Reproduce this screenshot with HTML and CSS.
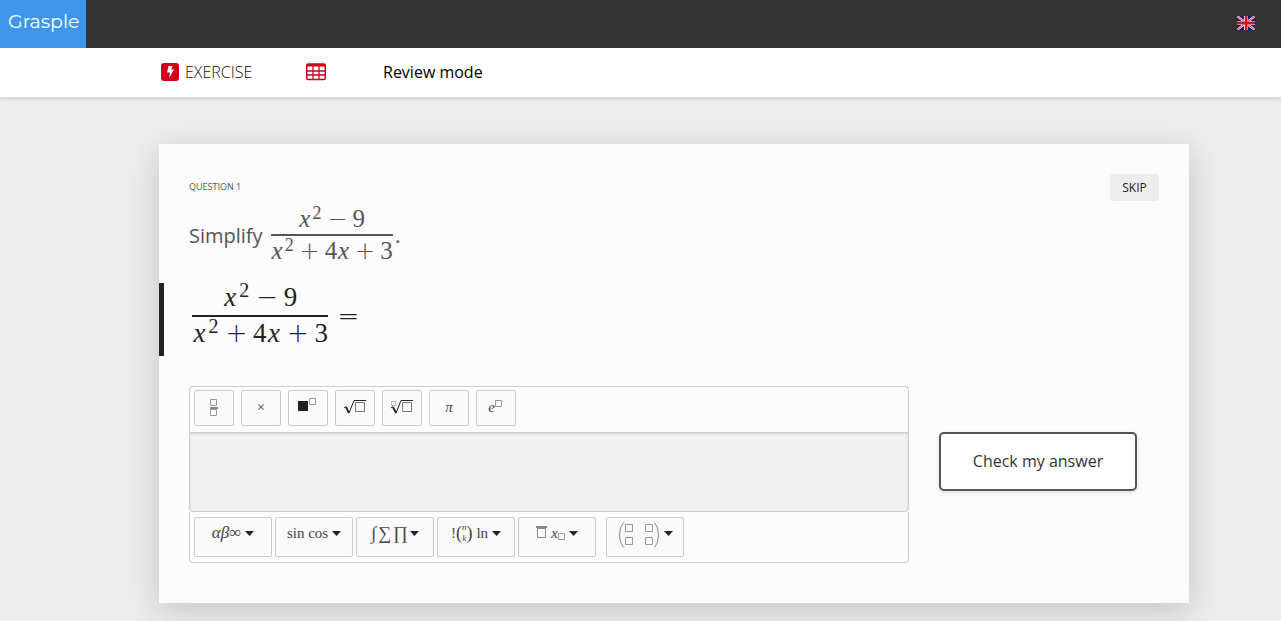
FILE: index.html
```html
<!DOCTYPE html>
<html lang="en">
<head>
<meta charset="utf-8">
<meta name="viewport" content="width=device-width, initial-scale=1">
<title>Grasple</title>
<link rel="stylesheet" href="styles.css">
</head>
<body>
<header class="topbar">
  <a class="brand" href="#">Grasple</a>
  <button class="language" type="button" aria-label="English">
    <svg width="18" height="14" viewBox="0 0 18 14"><path fill="#0a1670" d="M0 0h18v14H0z"/><path stroke="#e8dce4" stroke-width="2.400" d="M0 0l18 14M18 0L0 14"/><path stroke="#d8404c" stroke-width="1" d="M0 0l18 14M18 0L0 14"/><path fill="#f4e4e8" d="M7 0h4v14H7zM0 5h18v4H0z"/><path fill="#d5101c" d="M8 0h2.500v14H8zM0 5.500h18v3H0z"/></svg>
  </button>
</header>
<nav class="subnav">
  <a class="subnav-item exercise" href="#">
    <svg width="18" height="18" viewBox="0 0 18 18"><rect width="18" height="18" rx="3" fill="#d0021b"/><path fill="#fff" d="M7.500 3h4l-1.300 3.500H13L8 15l1-5.500H6z"/></svg>
    EXERCISE</a>
  <a class="subnav-item table-link" href="#" aria-label="Overview">
    <svg width="20" height="18" viewBox="0 0 20 18"><rect x=".75" y="1" width="18.500" height="15.500" rx="1.500" fill="none" stroke="#d0021b" stroke-width="1.500"/><path fill="#d0021b" d="M1 1h18v2.500H1z"/><path stroke="#d0021b" stroke-width="1.300" d="M1 8h18M1 12h18M7 3v13M13 3v13"/></svg>
  </a>
  <span class="subnav-item mode">Review mode</span>
</nav>
<main class="page">
  <section class="card">
    <div class="card-head">
      <h1 class="label">QUESTION 1</h1>
      <button class="skip" type="button">SKIP</button>
    </div>
    <p class="question">Simplify
      <span class="frac"><span class="num"><i>x</i><sup>2</sup><span class="op">−</span>9</span><span class="den"><i>x</i><sup>2</sup><span class="op">+</span>4<i>x</i><span class="op">+</span>3</span></span><span class="dot">.</span></p>
    <div class="statement">
      <span class="frac"><span class="num"><i>x</i><sup>2</sup><span class="op">−</span>9</span><span class="den"><i>x</i><sup>2</sup><span class="op">+</span>4<i>x</i><span class="op">+</span>3</span></span><span class="op">=</span>
    </div>
    <form class="answer">
      <div class="editor">
        <div class="tools tools-top">
          <button class="key" type="button" aria-label="Fraction"><svg width="8" height="18" viewBox="0 0 8 18" fill="none" stroke="#999"><path d="M.5 1.500h6v6h-6zM.5 11.500h6v6h-6z"/><path stroke-width="2" stroke="#888" d="M0 10h8"/></svg></button>
          <button class="key" type="button">×</button>
          <button class="key" type="button" aria-label="Power"><svg width="20" height="20" viewBox="0 0 20 20"><path fill="#222" d="M0 4h10v10H0z"/><path fill="none" stroke="#999" d="M11.500 1.500h6v6h-6z"/></svg></button>
          <button class="key" type="button" aria-label="Square root"><svg width="24" height="16" viewBox="0 0 24 16" fill="none" stroke="#222"><path d="M1 9l2-1.500"/><path stroke-width="1.800" d="M3 8l3 6"/><path d="M6 14l5-12.500"/><path d="M11 1.500h12"/><path stroke="#777" d="M12.500 3.500h9v9h-9z"/></svg></button>
          <button class="key" type="button" aria-label="Nth root"><svg width="24" height="16" viewBox="0 0 24 16" fill="none" stroke="#222"><path stroke="#bbb" d="M1.500 2.500h4v4h-4z"/><path d="M1 9l2-1.500"/><path stroke-width="1.800" d="M3 8l3 6"/><path d="M6 14l5-12.500"/><path d="M11 1.500h12"/><path stroke="#777" d="M12.500 3.500h9v9h-9z"/></svg></button>
          <button class="key" type="button"><i>π</i></button>
          <button class="key key-exp" type="button" aria-label="Exponential"><i>e</i><svg width="7" height="14" viewBox="0 0 7 14"><path fill="none" stroke="#999" d="M.5 .5h6v6h-6z"/></svg></button>
        </div>
        <textarea class="field" aria-label="Your answer"></textarea>
        <div class="tools tools-bottom">
          <button class="key menu greek" type="button"><span><i>αβ</i>∞</span><svg class="caret" width="9" height="5" viewBox="0 0 9 5"><path d="M0 0h9L4.500 5z"/></svg></button>
          <button class="key menu" type="button"><span>sin cos</span><svg class="caret" width="9" height="5" viewBox="0 0 9 5"><path d="M0 0h9L4.500 5z"/></svg></button>
          <button class="key menu large" type="button"><span>∫</span><span>∑</span><span>∏</span><svg class="caret" width="9" height="5" viewBox="0 0 9 5"><path d="M0 0h9L4.500 5z"/></svg></button>
          <button class="key menu" type="button"><span class="binomial">!<span class="paren">(</span><span class="stack"><i>n</i><i>k</i></span><span class="paren">)</span> ln</span><svg class="caret" width="9" height="5" viewBox="0 0 9 5"><path d="M0 0h9L4.500 5z"/></svg></button>
          <button class="key menu" type="button"><svg width="11" height="16" viewBox="0 0 11 16"><path fill="#888" d="M0 1h11v2H0z"/><path fill="none" stroke="#888" d="M1.500 3.500h8v9h-8z"/></svg><i>x</i><svg class="index" width="7" height="16" viewBox="0 0 7 16"><path fill="none" stroke="#999" d="M.5 8.500h6v6h-6z"/></svg><svg class="caret" width="9" height="5" viewBox="0 0 9 5"><path d="M0 0h9L4.500 5z"/></svg></button>
          <button class="key menu matrix" type="button" aria-label="Matrix"><svg width="42" height="26" viewBox="0 0 42 26" fill="none" stroke="#888"><path d="M5.500 .5Q1.500 5 1.500 13t4 12.500M36.500 .5Q40.500 5 40.500 13t-4 12.500"/><path stroke="#999" d="M7.500 2.500h7v7h-7zM27.500 2.500h7v7h-7zM7.500 15.500h7v7h-7zM27.500 15.500h7v7h-7z"/></svg><svg class="caret" width="9" height="9" viewBox="0 0 9 9"><path d="M0 0h9L4.500 5z"/></svg></button>
        </div>
      </div>
      <button class="check" type="button">Check my answer</button>
    </form>
  </section>
</main>
</body>
</html>
```
FILE: styles.css
```css
* { box-sizing: border-box; }
body {
  margin: 0;
  min-height: 100vh;
  background: #ededed;
  color: #222;
  font-family: "Open Sans", "Noto Sans", sans-serif;
  font-size: 16px;
}
a { color: inherit; text-decoration: none; }
button { margin: 0; padding: 0; font: inherit; color: inherit; cursor: pointer; }
svg { display: block; flex: none; }

.topbar {
  display: flex;
  justify-content: space-between;
  height: 48px;
  background: #333;
}
.brand {
  width: 86px;
  padding: 9px 0 0 8px;
  background: #4096ec;
  color: #fff;
  font-family: Montserrat, "Open Sans", sans-serif;
  font-size: 19px;
  line-height: 26px;
}
.language { margin-right: 26px; padding-bottom: 2px; border: 0; background: none; }

.subnav {
  display: flex;
  align-items: center;
  height: 50px;
  padding: 0 0 2px 161px;
  background: #fff;
  border-bottom: 1px solid #ddd;
  box-shadow: 0 1px 3px rgba(0, 0, 0, .15);
  color: #111;
}
.exercise { display: flex; align-items: center; gap: 6px; width: 145px; font-weight: 350; }
.table-link { width: 77px; }
.mode { font-weight: 500; color: #000; }

.page { padding: 46px 92px 18px 159px; }
.card {
  padding: 30px 30px 40px;
  background: #fcfcfc;
  box-shadow: 0 8px 30px rgba(40, 40, 50, .2);
}
.card-head { display: flex; justify-content: space-between; align-items: flex-start; height: 27px; }
.label { margin: 5px 0 0; font-size: 9px; line-height: 16px; font-weight: 400; color: #555; }
.skip {
  width: 49px;
  height: 27px;
  border: 0;
  border-radius: 3px;
  background: #ededed;
  font-size: 12px;
}

.question {
  display: flex;
  align-items: center;
  gap: 8px;
  height: 68px;
  margin: 0;
  color: #555;
  font-size: 20px;
}
.frac, .dot { font-family: "Liberation Serif", serif; }
.frac { display: inline-flex; flex-direction: column; margin-top: 2px; font-size: 25px; line-height: 30px; text-align: center; }
.num, .den { display: flex; justify-content: center; height: 32px; }
.num { border-bottom: 2px solid; }
.frac i { width: 13px; }
.frac sup { width: 11px; font-size: 18px; line-height: 18px; }
.op {
  width: 30px;
  font-family: "DejaVu Sans", sans-serif;
  font-weight: 200;
  font-size: 24px;
  text-align: center;
}
.dot { margin-left: -6px; font-size: 24px; }

.statement {
  display: flex;
  align-items: center;
  height: 73px;
  margin: 14px 0 30px -30px;
  padding: 0 0 8px 28px;
  border-left: 5px solid #222;
}
.statement .frac { font-size: 27px; }
.statement .num, .statement .den { height: 36px; }
.statement .frac { line-height: 32px; }
.statement .frac i { width: 15px; }
.statement sup { width: 13px; font-size: 20px; }
.statement .op { width: 33px; font-size: 26px; }
.statement > .op { width: 41px; }

.answer { display: flex; align-items: center; gap: 30px; padding-right: 22px; }
.editor { flex: 1; display: flex; flex-direction: column; }
.tools { display: flex; border: 1px solid #ccc; }
.tools-top { gap: 7px; padding: 3px 4px 6px; border-bottom: 0; border-radius: 4px 4px 0 0; }
.tools-bottom { gap: 3px; padding: 5px 4px; border-top: 0; border-radius: 0 0 4px 4px; }
.field {
  display: block;
  height: 80px;
  padding: 10px;
  resize: none;
  border: 1px solid #ccc;
  border-radius: 0 0 4px 4px;
  background: #f1f1f1;
  box-shadow: inset 0 1px 2px rgba(0, 0, 0, .12);
  font: inherit;
}
.key {
  display: flex;
  align-items: center;
  justify-content: center;
  width: 40px;
  height: 36px;
  padding-bottom: 2px;
  border: 1px solid #ccc;
  border-radius: 2px;
  background: #fafafa;
  color: #444;
  font-family: "Liberation Serif", serif;
  font-size: 15px;
}
.key-exp { padding: 0 2px 2px 0; }
.menu { gap: 4px; width: 78px; height: 40px; padding-bottom: 8px; }
.menu .index { margin-left: -4px; }
.greek { font-size: 17px; }
.large { gap: 2px; font-size: 18px; }
.caret { fill: #222; }
.matrix { margin-left: 7px; padding-bottom: 4px; }
.binomial { display: flex; align-items: center; }
.binomial .paren { font-size: 18px; }
.stack { display: flex; flex-direction: column; font-size: 9px; line-height: 11px; }
.binomial .paren:last-of-type { margin-right: 4px; }

.check {
  width: 198px;
  height: 59px;
  margin-top: -26px;
  padding-bottom: 2px;
  border: 2px solid #555;
  border-radius: 5px;
  background: #fff;
  box-shadow: 0 2px 5px rgba(0, 0, 0, .12);
  color: #333;
}
```
